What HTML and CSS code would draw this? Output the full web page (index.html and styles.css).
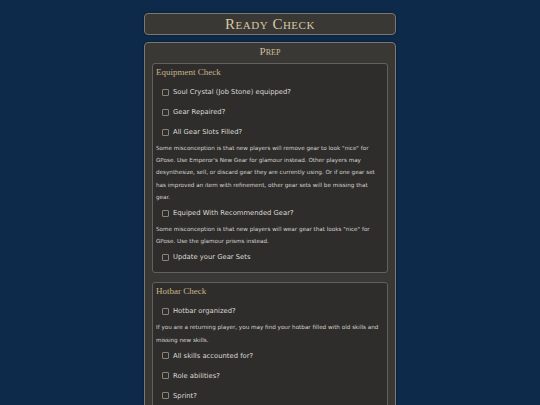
FILE: index.html
```
<!DOCTYPE html>
<html>
<head>
<meta charset="utf-8">
<link rel="stylesheet" href="styles.css">
</head>
<body>
<div class="page">
  <header class="title-box"><h1>Ready Check</h1></header>
  <section class="panel">
    <h2 class="panel-title">Prep</h2>
    <div class="groups">
      <div class="group">
        <div class="legend">Equipment Check</div>
        <label class="item"><span class="box"></span>Soul Crystal (Job Stone) equipped?</label>
        <label class="item"><span class="box"></span>Gear Repaired?</label>
        <label class="item"><span class="box"></span>All Gear Slots Filled?</label>
        <p class="note">Some misconception is that new players will remove gear to look "nice" for GPose. Use Emperor's New Gear for glamour instead. Other players may desynthesize, sell, or discard gear they are currently using. Or if one gear set has improved an item with refinement, other gear sets will be missing that gear.</p>
        <label class="item"><span class="box"></span>Equiped With Recommended Gear?</label>
        <p class="note">Some misconception is that new players will wear gear that looks "nice" for GPose. Use the glamour prisms instead.</p>
        <label class="item"><span class="box"></span>Update your Gear Sets</label>
      </div>
      <div class="group">
        <div class="legend">Hotbar Check</div>
        <label class="item"><span class="box"></span>Hotbar organized?</label>
        <p class="note">If you are a returning player, you may find your hotbar filled with old skills and missing new skills.</p>
        <label class="item"><span class="box"></span>All skills accounted for?</label>
        <label class="item"><span class="box"></span>Role abilities?</label>
        <label class="item"><span class="box"></span>Sprint?</label>
      </div>
    </div>
  </section>
</div>
</body>
</html>
```
FILE: styles.css
```
html, body {
  margin: 0;
  padding: 0;
  background: #0e2a4a;
  height: 100%;
  overflow: hidden;
}
.page {
  width: 252px;
  margin: 0 auto;
  padding-top: 13px;
  display: flex;
  flex-direction: column;
  gap: 7px;
}
.title-box {
  height: 20px;
  background: #393835;
  border: 1px solid #7a786f;
  border-radius: 4px;
  display: flex;
  align-items: center;
  justify-content: center;
  box-shadow: 0 0 2px rgba(0,0,0,0.6);
}
h1 {
  margin: 0;
  font-family: "Liberation Serif", "DejaVu Serif", serif;
  font-variant: small-caps;
  font-weight: normal;
  font-size: 15px;
  letter-spacing: 0.5px;
  color: #d8c7a0;
}
.panel {
  background: #393835;
  border: 1px solid #7a786f;
  border-radius: 4px;
  padding: 2px 7px 8px;
  box-shadow: 0 0 2px rgba(0,0,0,0.6);
}
.panel-title {
  margin: 0 0 5px;
  text-align: center;
  font-family: "Liberation Serif", "DejaVu Serif", serif;
  font-variant: small-caps;
  font-weight: normal;
  font-size: 11px;
  color: #d2bf98;
  line-height: 13px;
}
.groups {
  display: flex;
  flex-direction: column;
  gap: 9px;
}
.group {
  background: #2e2d2b;
  border: 1px solid #63615c;
  border-radius: 3px;
  padding: 2px 5px 5px 3px;
}
.legend {
  font-family: "Liberation Serif", "DejaVu Serif", serif;
  font-size: 9px;
  color: #c9b488;
  line-height: 12px;
  margin-bottom: 4px;
}
.item {
  display: flex;
  align-items: center;
  height: 20px;
  padding-left: 6px;
  font-family: "DejaVu Sans", sans-serif;
  font-size: 6.8px;
  color: #dcdad4;
}
.box {
  width: 5px;
  height: 5px;
  border: 1px solid #8b8476;
  border-radius: 1px;
  margin-right: 4px;
  flex: none;
}
.note {
  margin: 0;
  font-family: "DejaVu Sans", sans-serif;
  font-size: 5.65px;
  line-height: 12.2px;
  color: #d6d4ce;
}
```
